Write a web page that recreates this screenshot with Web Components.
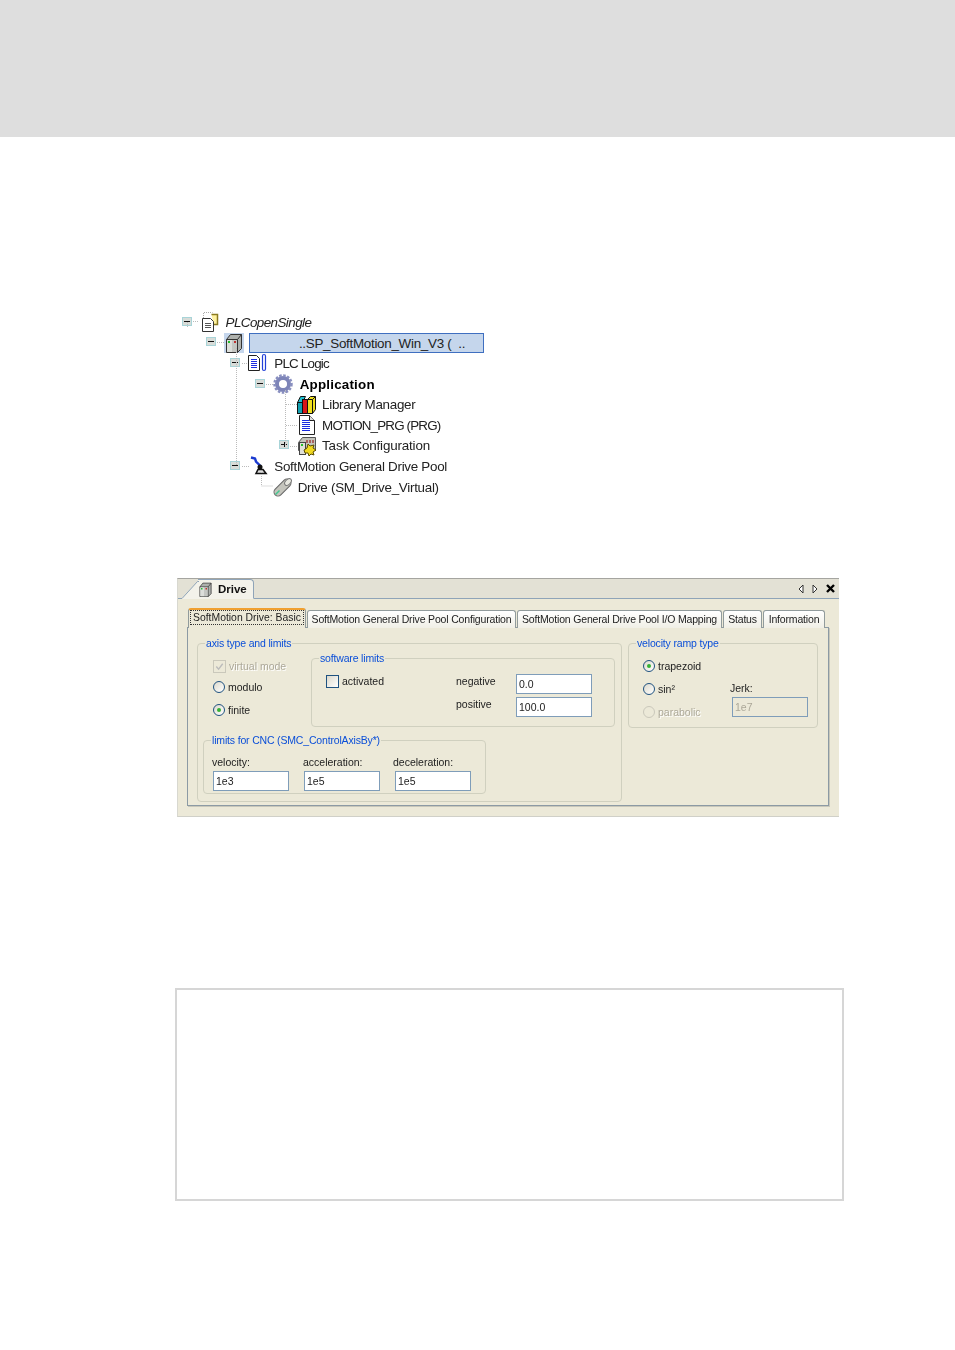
<!DOCTYPE html>
<html>
<head>
<meta charset="utf-8">
<style>
	html, body{
		margin: 0;
		background: #fff;
		font-family: "Liberation Sans", Arial, sans-serif;
	}
	main{
		display: block;
		padding-left: 177px;
	}
</style>
</head>
<body>
<page-band></page-band>
<main>
	<project-tree>
		<tree-row level="0" toggle="minus" icon="project" italic>PLCopenSingle</tree-row>
		<tree-row level="1" toggle="minus" icon="device" selected>..SP_SoftMotion_Win_V3 (&nbsp; ..</tree-row>
		<tree-row level="2" toggle="minus" icon="logic" style="letter-spacing:-.8px">PLC Logic</tree-row>
		<tree-row level="3" toggle="minus" icon="gear" bold style="--text-gap:7px">Application</tree-row>
		<tree-row level="4" icon="books" style="--text-gap:5px">Library Manager</tree-row>
		<tree-row level="4" icon="doc" style="--text-gap:5px;letter-spacing:-.84px">MOTION_PRG (PRG)</tree-row>
		<tree-row level="4" toggle="plus" icon="task" style="--text-gap:5px;letter-spacing:-.17px">Task Configuration</tree-row>
		<tree-row level="2" toggle="minus" icon="arm">SoftMotion General Drive Pool</tree-row>
		<tree-row level="3" icon="drive" style="--text-gap:5px">Drive (SM_Drive_Virtual)</tree-row>
	</project-tree>
	<drive-editor></drive-editor>
	<empty-box></empty-box>
</main>
<script>
const ICONS = {
	project: `<path d="M3.5 6V.5h9" fill="none" stroke="#aaa" stroke-dasharray="1 1"/><path d="M11.5 2.5h6v10h-4" fill="#fff2a0" stroke="#8a7a20" stroke-width="1.5"/><path d="M2.5 6.5h8l3 3v10h-11z" fill="#fff" stroke="#333"/><path d="M5 11.5h6M5 13.5h6M5 15.5h6" stroke="#555"/>`,
	device: `<path d="M2.5 6.5l4-5h11v14l-4 4h-11z" fill="#aeb1ad" stroke="#333"/><path d="M2.5 6.5h11v13M13.5 6.5l4-5" fill="none" stroke="#333"/><rect x="3" y="7" width="5" height="12" fill="#dcdeda"/><rect x="8" y="7" width="5" height="12" fill="#c4c6c2"/><rect x="4" y="8" width="2" height="2" fill="#22c02c"/><rect x="10" y="8" width="2" height="2" fill="#c03030"/>`,
	logic: `<path d="M.5 2.5h8l3 3v12H.5z" fill="#fff" stroke="#222"/><path d="M3 6.5h6M3 8.5h6M3 10.5h6M3 12.5h6M3 14.5h6" stroke="#1c2ce0"/><path d="M14.5 3a1.5 1.5 0 0 1 3 0v13a1.5 1.5 0 0 1-3 0z" fill="#fff" stroke="#2240d8" stroke-width="1.2"/>`,
	gear: `<circle cx="10" cy="10" r="6" fill="none" stroke="#7d84b8" stroke-width="4"/><circle cx="10" cy="10" r="8.5" fill="none" stroke="#8a90c0" stroke-width="2.5" stroke-dasharray="2.5 1.5"/><circle cx="10" cy="10" r="3.5" fill="#fff"/>`,
	books: `<path d="M.5 7.5l3-6h5l-3 6z" fill="#20c0d0" stroke="#111"/><rect x=".5" y="7.5" width="5" height="11" fill="#12a0b0" stroke="#111"/><rect x="5.5" y="4.5" width="5" height="14" fill="#d81818" stroke="#111"/><path d="M10.5 4.5l3-3h5v13l-3 4h-5z" fill="#f0e020" stroke="#111"/><path d="M15.5 4.5v14M10.5 4.5h5l3-3" fill="none" stroke="#111"/>`,
	doc: `<path d="M2.5 .5h10l5 5v14h-15z" fill="#fff" stroke="#222"/><path d="M12.5 .5v5h5" fill="#ddd" stroke="#222"/><path d="M5 5.5h7M5 7.5h8M5 9.5h8M5 11.5h8M5 13.5h8M5 15.5h8" stroke="#1c2ce0"/>`,
	task: `<path d="M1.5 6.5l4-5h13v13h-17z" fill="#c4c4bc" stroke="#555"/><rect x="2.5" y="6.5" width="6" height="12" fill="#e0e0d8" stroke="#444"/><rect x="4" y="8" width="2" height="2" fill="#22c02c"/><path d="M10 4v3M13 4v3M16 4v3" stroke="#a04040" stroke-width="1.5"/><path d="M7 14l3-2 1-4 2 2 4-1-1 3 3 2-3 2 1 3-3-1-2 2-1-3-3 0z" fill="#f0d820" stroke="#5a4c00"/>`,
	arm: `<path d="M3 1.5l4 1 1 3 4 4" fill="none" stroke="#1a3ad0" stroke-width="2.4"/><circle cx="12" cy="11" r="2.5" fill="#111"/><path d="M8 17.5l2-4h5l3 4z" fill="#ddd" stroke="#111" stroke-width="1.6"/>`,
	drive: `<path d="M5 15L14 6" stroke="#666" stroke-width="9" stroke-linecap="round"/><path d="M5 15L14 6" stroke="#c4c4bc" stroke-width="7" stroke-linecap="round"/><ellipse cx="15" cy="5" rx="2.5" ry="4" transform="rotate(45 15 5)" fill="#e8e8e0" stroke="#777"/><path d="M2.5 17.5l4-4" stroke="#40c890" stroke-width="1.5"/>`
};

class PageBand extends HTMLElement{
	constructor(){
		super();
		this.attachShadow({mode: 'open'}).innerHTML = `
		<style>
			:host{
				display: block;
				height: 137px;
				background: #dedede;
			}
		</style>`;
	}
}
customElements.define('page-band', PageBand);

class ProjectTree extends HTMLElement{
	constructor(){
		super();
		this.attachShadow({mode: 'open'}).innerHTML = `
		<style>
			:host{
				display: block;
				position: relative;
				width: 320px;
				margin-top: 175px;
				padding-left: 4.5px;
				filter: blur(.3px);
			}
			svg{
				position: absolute;
				left: 0;
				top: 0;
				width: 320px;
				height: 190px;
				pointer-events: none;
			}
			path{
				fill: none;
				stroke: #bbb;
				stroke-dasharray: 1 1;
			}
		</style>
		<slot></slot>
		<svg viewBox="0 0 320 190">
			<path d="M10.5 15v-5M34.5 26h0M59.5 36v118M84.5 160v14h12M108.5 78v56"/>
			<path d="M16 9.5h6M40 30.5h7M65 51.5h6M89 72.5h7M109 92.5h11M109 113.5h11M113 134.5h7M65 154.5h7"/>
		</svg>`;
	}
}
customElements.define('project-tree', ProjectTree);

class TreeRow extends HTMLElement{
	constructor(){
		super();
		const level = Number(this.getAttribute('level')) * 24.4;
		const toggle = this.getAttribute('toggle');
		let mark = '';
		if(toggle){
			mark = `<span class="toggle">${toggle === 'plus' ? '<i class="h"></i><i class="v"></i>' : '<i class="h"></i>'}</span>`;
		}
		this.attachShadow({mode: 'open'}).innerHTML = `
		<style>
			:host{
				display: flex;
				align-items: center;
				height: 20.6px;
				padding-left: ${level}px;
				font-size: 13.4px;
				letter-spacing: -.28px;
				color: #222;
				white-space: nowrap;
			}
			:host([italic]){ font-style: italic; letter-spacing: -.55px; }
			:host([bold]){ font-weight: bold; color: #000; letter-spacing: .2px; }
			.cell{
				flex: none;
				width: 18px;
				height: 11px;
				display: flex;
			}
			.toggle{
				position: relative;
				display: block;
				width: 10px;
				height: 9px;
				background: #d8dcd8;
				border: 1px solid #a8d4d8;
				box-sizing: border-box;
			}
			.toggle i{
				position: absolute;
				background: #111;
			}
			.h{ left: 1px; top: 3px; width: 6px; height: 1px; }
			.v{ left: 3.5px; top: 1px; width: 1px; height: 5px; }
			.icon{
				flex: none;
				width: 20px;
				height: 20px;
				display: block;
			}
			.text{
				margin-left: var(--text-gap, 6px);
			}
			:host([selected]) .icon{
				background: #c5d6ec;
			}
			:host([selected]) .text{
				margin-left: 5px;
				box-sizing: border-box;
				width: 235px;
				height: 20px;
				line-height: 19px;
				padding-left: 49px;
				background: #c5d6ec;
				border: 1px solid #3f6fc0;
			}
		</style>
		<span class="cell">${mark}</span>
		<svg class="icon" viewBox="0 0 20 20">${ICONS[this.getAttribute('icon')]}</svg>
		<span class="text"><slot></slot></span>`;
	}
}
customElements.define('tree-row', TreeRow);

class GroupBox extends HTMLElement{
	constructor(){
		super();
		this.attachShadow({mode: 'open'}).innerHTML = `
		<style>
			:host{
				display: block;
			}
			fieldset{
				margin: 0;
				padding: 0;
				height: 100%;
				box-sizing: border-box;
				border: 1px solid #d0d0bf;
				border-radius: 4px;
			}
			legend{
				margin-left: 7px;
				padding: 0 1px;
				height: 12px;
				line-height: 12px;
				font-size: 10.5px;
				letter-spacing: -.17px;
				color: #0b4fd8;
			}
		</style>
		<fieldset>
			<legend>${this.getAttribute('label')}</legend>
			<slot></slot>
		</fieldset>`;
	}
}
customElements.define('group-box', GroupBox);

class OptionMark extends HTMLElement{
	constructor(){
		super();
		const box = this.getAttribute('type') === 'check';
		const tick = box && this.hasAttribute('checked') ? '<svg viewBox="0 0 12 12"><path d="M2.5 6l2.5 3 4.5-6" fill="none" stroke="#bbb" stroke-width="1.5"/></svg>' : '';
		this.attachShadow({mode: 'open'}).innerHTML = `
		<style>
			:host{
				display: flex;
				align-items: center;
				gap: 3px;
				height: 16px;
				font-size: 10.5px;
				color: #222;
				white-space: nowrap;
			}
			:host([disabled]){
				color: #aca899;
				text-shadow: 1px 1px 0 #fff;
			}
			.mark{
				flex: none;
				position: relative;
				box-sizing: border-box;
				width: 12px;
				height: 12px;
				border: 1px solid #1f5280;
				border-radius: 50%;
				background: linear-gradient(135deg, #dcd9cc, #fff);
			}
			:host([type=check]) .mark{
				width: 13px;
				height: 13px;
				border-radius: 0;
			}
			:host([disabled]) .mark{
				border-color: #cac8bb;
				background: #ece9d8;
			}
			:host([type=radio][checked]) .mark::after{
				content: "";
				position: absolute;
				left: 3px;
				top: 3px;
				width: 4px;
				height: 4px;
				border-radius: 50%;
				background: #35b135;
			}
			svg{
				display: block;
				width: 100%;
				height: 100%;
			}
		</style>
		<span class="mark">${tick}</span>
		<slot></slot>`;
	}
}
customElements.define('option-mark', OptionMark);

class ValueBox extends HTMLElement{
	constructor(){
		super();
		this.attachShadow({mode: 'open'}).innerHTML = `
		<style>
			:host{
				display: block;
				box-sizing: border-box;
				width: 76px;
				height: 20px;
				line-height: 18px;
				padding-left: 2px;
				background: #fff;
				border: 1px solid #7f9db9;
				font-size: 10.5px;
				color: #222;
			}
			:host([disabled]){
				background: #ece9d8;
				color: #aca899;
			}
		</style>
		<slot></slot>`;
	}
}
customElements.define('value-box', ValueBox);

class TabButton extends HTMLElement{
	constructor(){
		super();
		this.attachShadow({mode: 'open'}).innerHTML = `
		<style>
			:host{
				display: block;
				box-sizing: border-box;
				height: 18px;
				margin-top: 1px;
				line-height: 17px;
				text-align: center;
				font-size: 10.5px;
				letter-spacing: -.17px;
				color: #222;
				white-space: nowrap;
				background: linear-gradient(#fff, #f0efe6);
				border: 1px solid #919b9c;
				border-bottom: 0;
				border-radius: 3px 3px 0 0;
			}
			:host([active]){
				height: 20px;
				margin-top: -1px;
				position: relative;
				z-index: 1;
				line-height: 15px;
				background: #ece9d8;
				border-top: 2px solid #f0a030;
				font-size: 10.4px;
				letter-spacing: 0;
			}
			span{
				display: inline-block;
				line-height: 13px;
				padding: 0 2px;
			}
			:host([active]) span{
				border: 1px dotted #333;
			}
		</style>
		<span><slot></slot></span>`;
	}
}
customElements.define('tab-button', TabButton);

class DriveEditor extends HTMLElement{
	constructor(){
		super();
		this.attachShadow({mode: 'open'}).innerHTML = `
		<style>
			:host{
				display: block;
				box-sizing: border-box;
				width: 662px;
				height: 239px;
				margin-top: 81px;
				background: #ece9d8;
				border-top: 1px solid #a5a5a0;
				border-left: 1px solid #d8d8d0;
				border-bottom: 1px solid #d0d0c8;
				font-size: 10.5px;
				color: #222;
				filter: blur(.25px);
			}
			.title{
				display: flex;
				align-items: flex-end;
				height: 20px;
				background: #e3e1d5;
				border-bottom: 1px solid #8fa4b8;
				box-sizing: border-box;
			}
			.doc{
				display: flex;
				align-items: center;
				gap: 5px;
				height: 18px;
				margin-left: 20px;
				margin-bottom: -1px;
				padding: 0 6px 0 0;
				background: #f3f2ea;
				border: 1px solid #8fa4b8;
				border-bottom: 1px solid #f3f2ea;
				border-left: 0;
				border-radius: 0 4px 0 0;
				font-size: 11.5px;
				font-weight: bold;
				color: #111;
				position: relative;
			}
			.slant{
				position: absolute;
				left: -17px;
				bottom: -1px;
				width: 18px;
				height: 18px;
			}
			.doc svg.dev{
				width: 15px;
				height: 15px;
			}
			.nav{
				margin-left: auto;
				display: flex;
				align-items: center;
				gap: 6px;
				height: 19px;
				padding-right: 3px;
			}
			.nav svg{
				display: block;
				width: 8px;
				height: 10px;
			}
			.nav svg.close{
				width: 11px;
				height: 11px;
			}
			.body{
				padding: 10px 9px 0;
			}
			.tabs{
				display: grid;
				grid-template-columns: 118px 209px 205px 39px 62px;
				gap: 0 1px;
				padding-left: 1px;
				position: relative;
				margin-bottom: -1px;
			}
			.panel{
				box-sizing: border-box;
				width: 642px;
				height: 179px;
				padding: 9px 9px;
				display: grid;
				grid-template-columns: 425px 190px;
				gap: 6px;
				align-items: start;
				border: 1px solid #8c9aa4;
				box-shadow: 1px 1px 0 #c8c7ba;
			}
			.axis{ height: 165px; }
			.ramp{ height: 91px; }
			.axis-top{
				display: grid;
				grid-template-columns: 108px 304px;
				height: 75px;
				margin: 3px 0 7px 5px;
			}
			.modes{
				display: grid;
				grid-auto-rows: 16px;
				gap: 6px;
				padding: 6px 0 0 10px;
			}
			.modes :nth-child(2){
				margin-top: -1px;
			}
			.limits{
				display: grid;
				grid-template-columns: 130px 60px 76px;
				grid-auto-rows: 20px;
				gap: 3px 0;
				padding: 10px 0 0 14px;
				align-items: center;
			}
			.limits span, .limits option-mark{
				margin-bottom: 6px;
			}
			.cnc{
				width: 283px;
				height: 60px;
				margin-left: 5px;
			}
			.cnc-grid{
				display: grid;
				grid-template-columns: 91px 91px 76px;
				gap: 3px 0;
				padding: 10px 0 0 9px;
				line-height: 12px;
			}
			.cnc-grid span{
				margin-left: -1px;
			}
			.cnc-grid span:nth-child(3){
				margin-left: -2px;
			}
			.ramp-grid{
				display: grid;
				grid-template-columns: 87px 76px;
				padding: 9px 0 0 14px;
			}
			.stack{
				display: grid;
				grid-auto-rows: 16px;
				gap: 7px;
			}
			.jerk{
				padding-top: 25px;
				line-height: 11px;
			}
			.jerk value-box{
				margin: 3px 0 0 2px;
			}
		</style>
		<div class="title">
			<div class="doc">
				<svg class="slant" viewBox="0 0 18 18"><path d="M0 18L16 1h2v17z" fill="#f3f2ea"/><path d="M0 17.5h1L16.5 .5H18" fill="none" stroke="#8fa4b8"/></svg>
				<svg class="dev" viewBox="0 0 20 20">${ICONS.device}</svg>
				Drive
			</div>
			<div class="nav">
				<svg viewBox="0 0 8 10"><path d="M6 1L2 5l4 4z" fill="#fff" stroke="#333"/></svg>
				<svg viewBox="0 0 8 10"><path d="M2 1l4 4-4 4z" fill="#fff" stroke="#333"/></svg>
				<svg class="close" viewBox="0 0 11 11"><path d="M2 2l7 7M9 2l-7 7" stroke="#000" stroke-width="2.4"/></svg>
			</div>
		</div>
		<div class="body">
			<div class="tabs">
				<tab-button active>SoftMotion Drive: Basic</tab-button>
				<tab-button>SoftMotion General Drive Pool Configuration</tab-button>
				<tab-button>SoftMotion General Drive Pool I/O Mapping</tab-button>
				<tab-button>Status</tab-button>
				<tab-button>Information</tab-button>
			</div>
			<div class="panel">
				<group-box class="axis" label="axis type and limits">
					<div class="axis-top">
						<div class="modes">
							<option-mark type="check" checked disabled>virtual mode</option-mark>
							<option-mark type="radio">modulo</option-mark>
							<option-mark type="radio" checked>finite</option-mark>
						</div>
						<group-box label="software limits">
							<div class="limits">
								<option-mark type="check">activated</option-mark>
								<span>negative</span>
								<value-box>0.0</value-box>
								<span></span>
								<span>positive</span>
								<value-box>100.0</value-box>
							</div>
						</group-box>
					</div>
					<group-box class="cnc" label="limits for CNC (SMC_ControlAxisBy*)">
						<div class="cnc-grid">
							<span>velocity:</span><span>acceleration:</span><span>deceleration:</span>
							<value-box>1e3</value-box><value-box>1e5</value-box><value-box>1e5</value-box>
						</div>
					</group-box>
				</group-box>
				<group-box class="ramp" label="velocity ramp type">
					<div class="ramp-grid">
						<div class="stack">
							<option-mark type="radio" checked>trapezoid</option-mark>
							<option-mark type="radio">sin²</option-mark>
							<option-mark type="radio" disabled>parabolic</option-mark>
						</div>
						<div class="jerk">
							<span>Jerk:</span>
							<value-box disabled>1e7</value-box>
						</div>
					</div>
				</group-box>
			</div>
		</div>`;
	}
}
customElements.define('drive-editor', DriveEditor);

class EmptyBox extends HTMLElement{
	constructor(){
		super();
		this.attachShadow({mode: 'open'}).innerHTML = `
		<style>
			:host{
				display: block;
				box-sizing: border-box;
				width: 669px;
				height: 213px;
				margin-top: 171px;
				margin-left: -2px;
				background: #fff;
				border: 2px solid #d6d6d6;
			}
		</style>`;
	}
}
customElements.define('empty-box', EmptyBox);
</script>
</body>
</html>
